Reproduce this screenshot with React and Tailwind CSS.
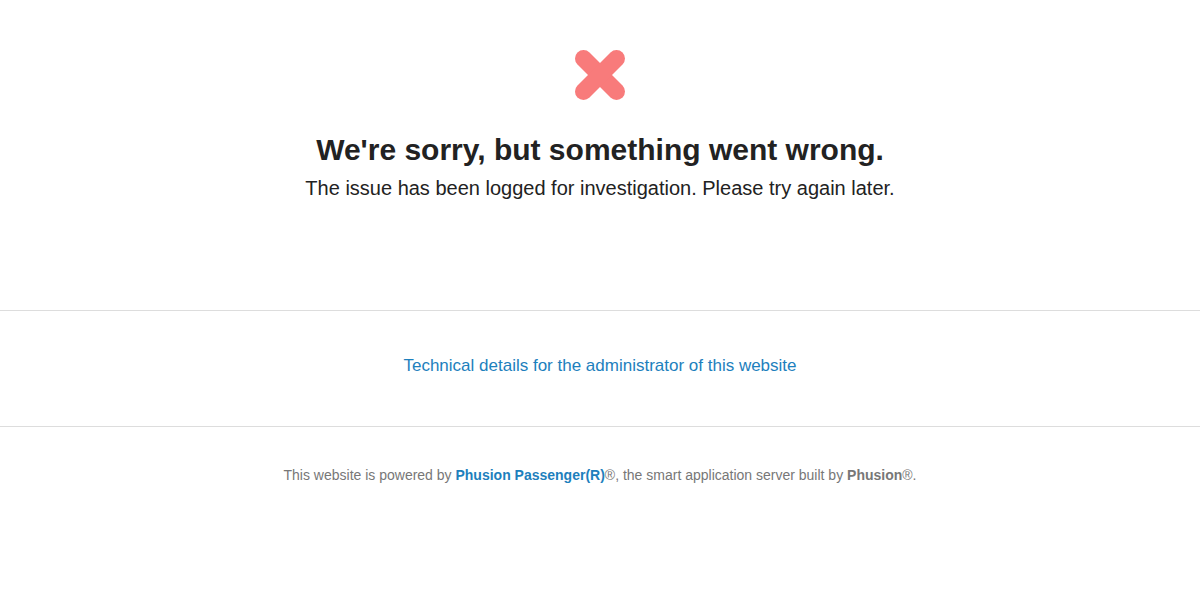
import React from 'react';

const CrossIcon = () => (
  <svg width="50" height="50" viewBox="0 0 50 50" className="block">
    <g stroke="#f87b7b" strokeWidth="17" strokeLinecap="round">
      <line x1="8.5" y1="8.5" x2="41.5" y2="41.5" />
      <line x1="41.5" y1="8.5" x2="8.5" y2="41.5" />
    </g>
  </svg>
);

export default function App() {
  return (
    <div className="min-h-[600px] bg-white text-center font-['Liberation_Sans',Arial,sans-serif]">
      <div className="pt-[50px] h-[310px]">
        <div className="flex justify-center">
          <CrossIcon />
        </div>
        <h1 className="mt-[31px] text-[30px] leading-[38px] font-bold text-[#222]">
          We're sorry, but something went wrong.
        </h1>
        <p className="mt-[7px] text-[20px] leading-[24px] text-[#222]">
          The issue has been logged for investigation. Please try again later.
        </p>
      </div>

      <div className="border-t border-b border-[#ddd] h-[117px] pb-[6px] flex items-center justify-center">
        <a href="#" className="text-[17px] leading-[20px] text-[#1d80bd]">
          Technical details for the administrator of this website
        </a>
      </div>

      <div className="pt-[39px] text-[14px] leading-[18px] text-[#777]">
        This website is powered by{' '}
        <a href="#" className="font-bold text-[#1d80bd]">Phusion Passenger(R)</a>®, the smart application server built by{' '}
        <b className="text-[#777]">Phusion</b>®.
      </div>
    </div>
  );
}
